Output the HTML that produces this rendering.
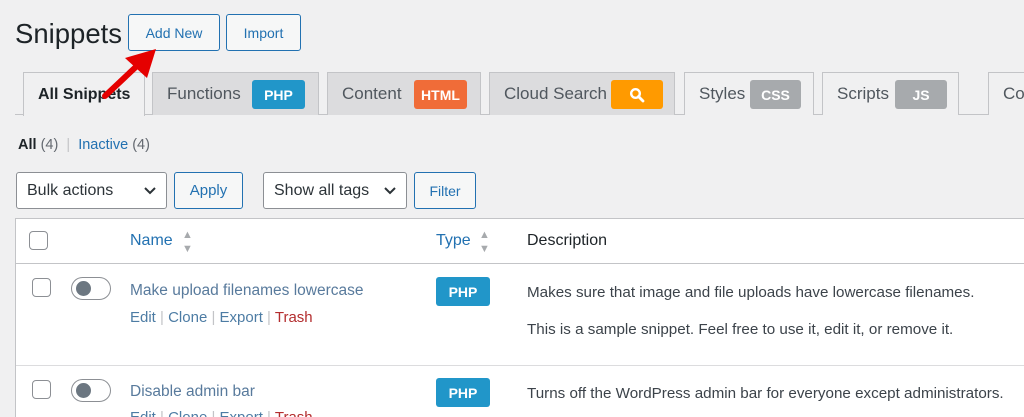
<!DOCTYPE html>
<html><head><meta charset="utf-8"><style>
*{box-sizing:border-box;margin:0;padding:0}
html,body{width:1024px;height:417px;overflow:hidden}
body{background:#f0f0f1;font-family:"Liberation Sans",sans-serif;color:#1d2327;position:relative}
.a{position:absolute;white-space:nowrap}
.btn{position:absolute;border:1px solid #2271b1;border-radius:3px;background:#f6f7f7;color:#2271b1;font-size:14px;display:flex;align-items:center;justify-content:center}
.tab{position:absolute;top:72px;height:43px;border:1px solid #c3c4c7;border-bottom:none;background:#dcdcde;font-size:17px;color:#50575e;display:flex;align-items:center;padding-left:14px}
.badge{position:absolute;top:7px;height:29px;border-radius:3px;color:#fff;font-weight:bold;font-size:14px;display:flex;align-items:center;justify-content:center}
.sel{position:absolute;border:1px solid #8c8f94;border-radius:3px;background:#fff;font-size:16px;color:#2c3338;display:flex;align-items:center;padding-left:10px}
.cb{position:absolute;width:19px;height:19px;border:1px solid #8c8f94;border-radius:4px;background:#fff}
.tog{position:absolute;width:40px;height:23px;border:1px solid #8c8f94;border-radius:12px;background:#fff}
.tog:after{content:"";position:absolute;left:4px;top:3px;width:15px;height:15px;border-radius:50%;background:#6c7781}
.php{position:absolute;width:54px;height:29px;border-radius:3px;background:#2196c9;color:#fff;font-weight:bold;font-size:14px;display:flex;align-items:center;justify-content:center}
.lk{color:#4d7ca4;font-size:15px}
.sep{color:#c3c4c7}
.tr{color:#b32d2e}
.d{font-size:15.2px;color:#3c434a}
</style></head><body>
<div class="a" style="left:15px;top:18px;font-size:27.5px;color:#1d2327">Snippets</div>
<div class="btn" style="left:128px;top:14px;width:92px;height:37px">Add New</div>
<div class="btn" style="left:226px;top:14px;width:75px;height:37px">Import</div>

<div class="a" style="left:15px;top:114px;width:1009px;height:1px;background:#c3c4c7"></div>
<div class="tab" style="left:23px;width:122px;background:#f0f0f1;height:44px;color:#1d2327;font-weight:bold;font-size:16px">All Snippets</div>
<div class="tab" style="left:152px;width:167px">Functions<div class="badge" style="left:99px;width:53px;background:#2196c9">PHP</div></div>
<div class="tab" style="left:327px;width:154px">Content<div class="badge" style="left:86px;width:53px;background:#f06c38">HTML</div></div>
<div class="tab" style="left:489px;width:186px">Cloud Search<div class="badge" style="left:121px;width:52px;background:#ff9a00"><svg width="16" height="16" viewBox="0 0 16 16"><circle cx="6.5" cy="6.5" r="4.3" fill="none" stroke="#fff" stroke-width="2.4"/><path d="M9.5 9.5L14 14" stroke="#fff" stroke-width="2.8" stroke-linecap="round"/></svg></div></div>
<div class="tab" style="left:684px;width:130px;background:#f0f0f1">Styles<div class="badge" style="left:65px;width:51px;background:#a7aaad">CSS</div></div>
<div class="tab" style="left:822px;width:137px;background:#f0f0f1">Scripts<div class="badge" style="left:72px;width:52px;background:#a7aaad">JS</div></div>
<div class="tab" style="left:988px;width:60px;background:#f0f0f1">Co</div>

<div class="a" style="left:18px;top:137px;font-size:14.5px"><b style="color:#1d2327;font-weight:bold">All</b> <span style="color:#646970">(4)</span> <span class="sep">&nbsp;|&nbsp;</span> <span style="color:#2271b1">Inactive</span> <span style="color:#646970">(4)</span></div>

<div class="sel" style="left:16px;top:172px;width:151px;height:37px">Bulk actions<svg style="position:absolute;right:9px;top:13px" width="14" height="10" viewBox="0 0 14 10"><path d="M2 2l5 5 5-5" fill="none" stroke="#2c3338" stroke-width="2"/></svg></div>
<div class="btn" style="left:174px;top:172px;width:69px;height:37px;font-size:15px">Apply</div>
<div class="sel" style="left:263px;top:172px;width:144px;height:37px">Show all tags<svg style="position:absolute;right:9px;top:13px" width="14" height="10" viewBox="0 0 14 10"><path d="M2 2l5 5 5-5" fill="none" stroke="#2c3338" stroke-width="2"/></svg></div>
<div class="btn" style="left:414px;top:172px;width:62px;height:37px">Filter</div>

<div class="a" style="left:15px;top:218px;width:1020px;height:210px;background:#fff;border:1px solid #c3c4c7"></div>
<div class="cb" style="left:29px;top:231px"></div>
<div class="a" style="left:130px;top:232px;font-size:16px;color:#2271b1">Name</div>
<div class="a" style="left:182px;top:229px;color:#a7aaad;font-size:11px">&#9650;</div>
<div class="a" style="left:182px;top:243px;color:#a7aaad;font-size:11px">&#9660;</div>
<div class="a" style="left:436px;top:232px;font-size:16px;color:#2271b1">Type</div>
<div class="a" style="left:479px;top:229px;color:#a7aaad;font-size:11px">&#9650;</div>
<div class="a" style="left:479px;top:243px;color:#a7aaad;font-size:11px">&#9660;</div>
<div class="a" style="left:527px;top:232px;font-size:16px;color:#1d2327">Description</div>
<div class="a" style="left:16px;top:263px;width:1010px;height:1px;background:#c3c4c7"></div>

<div class="cb" style="left:32px;top:278px"></div>
<div class="tog" style="left:71px;top:277px"></div>
<div class="a lk" style="left:130px;top:282px;color:#587a9c;font-size:15.5px">Make upload filenames lowercase</div>
<div class="a lk" style="left:130px;top:309px">Edit <span class="sep">|</span> Clone <span class="sep">|</span> Export <span class="sep">|</span> <span class="tr">Trash</span></div>
<div class="php" style="left:436px;top:277px">PHP</div>
<div class="a d" style="left:527px;top:284px">Makes sure that image and file uploads have lowercase filenames.</div>
<div class="a d" style="left:527px;top:321px">This is a sample snippet. Feel free to use it, edit it, or remove it.</div>
<div class="a" style="left:16px;top:365px;width:1010px;height:1px;background:#dcdcde"></div>

<div class="cb" style="left:32px;top:380px"></div>
<div class="tog" style="left:71px;top:379px"></div>
<div class="a lk" style="left:130px;top:383px;color:#587a9c;font-size:15.5px">Disable admin bar</div>
<div class="a lk" style="left:130px;top:409px">Edit <span class="sep">|</span> Clone <span class="sep">|</span> Export <span class="sep">|</span> <span class="tr">Trash</span></div>
<div class="php" style="left:436px;top:378px">PHP</div>
<div class="a d" style="left:527px;top:385px">Turns off the WordPress admin bar for everyone except administrators.</div>

<svg class="a" style="left:95px;top:44px" width="70" height="60" viewBox="0 0 70 60"><path d="M10 52L44 20" stroke="#e50000" stroke-width="6" stroke-linecap="round"/><path d="M30 14L61 5 52 34Z" fill="#e50000"/></svg>
</body></html>
